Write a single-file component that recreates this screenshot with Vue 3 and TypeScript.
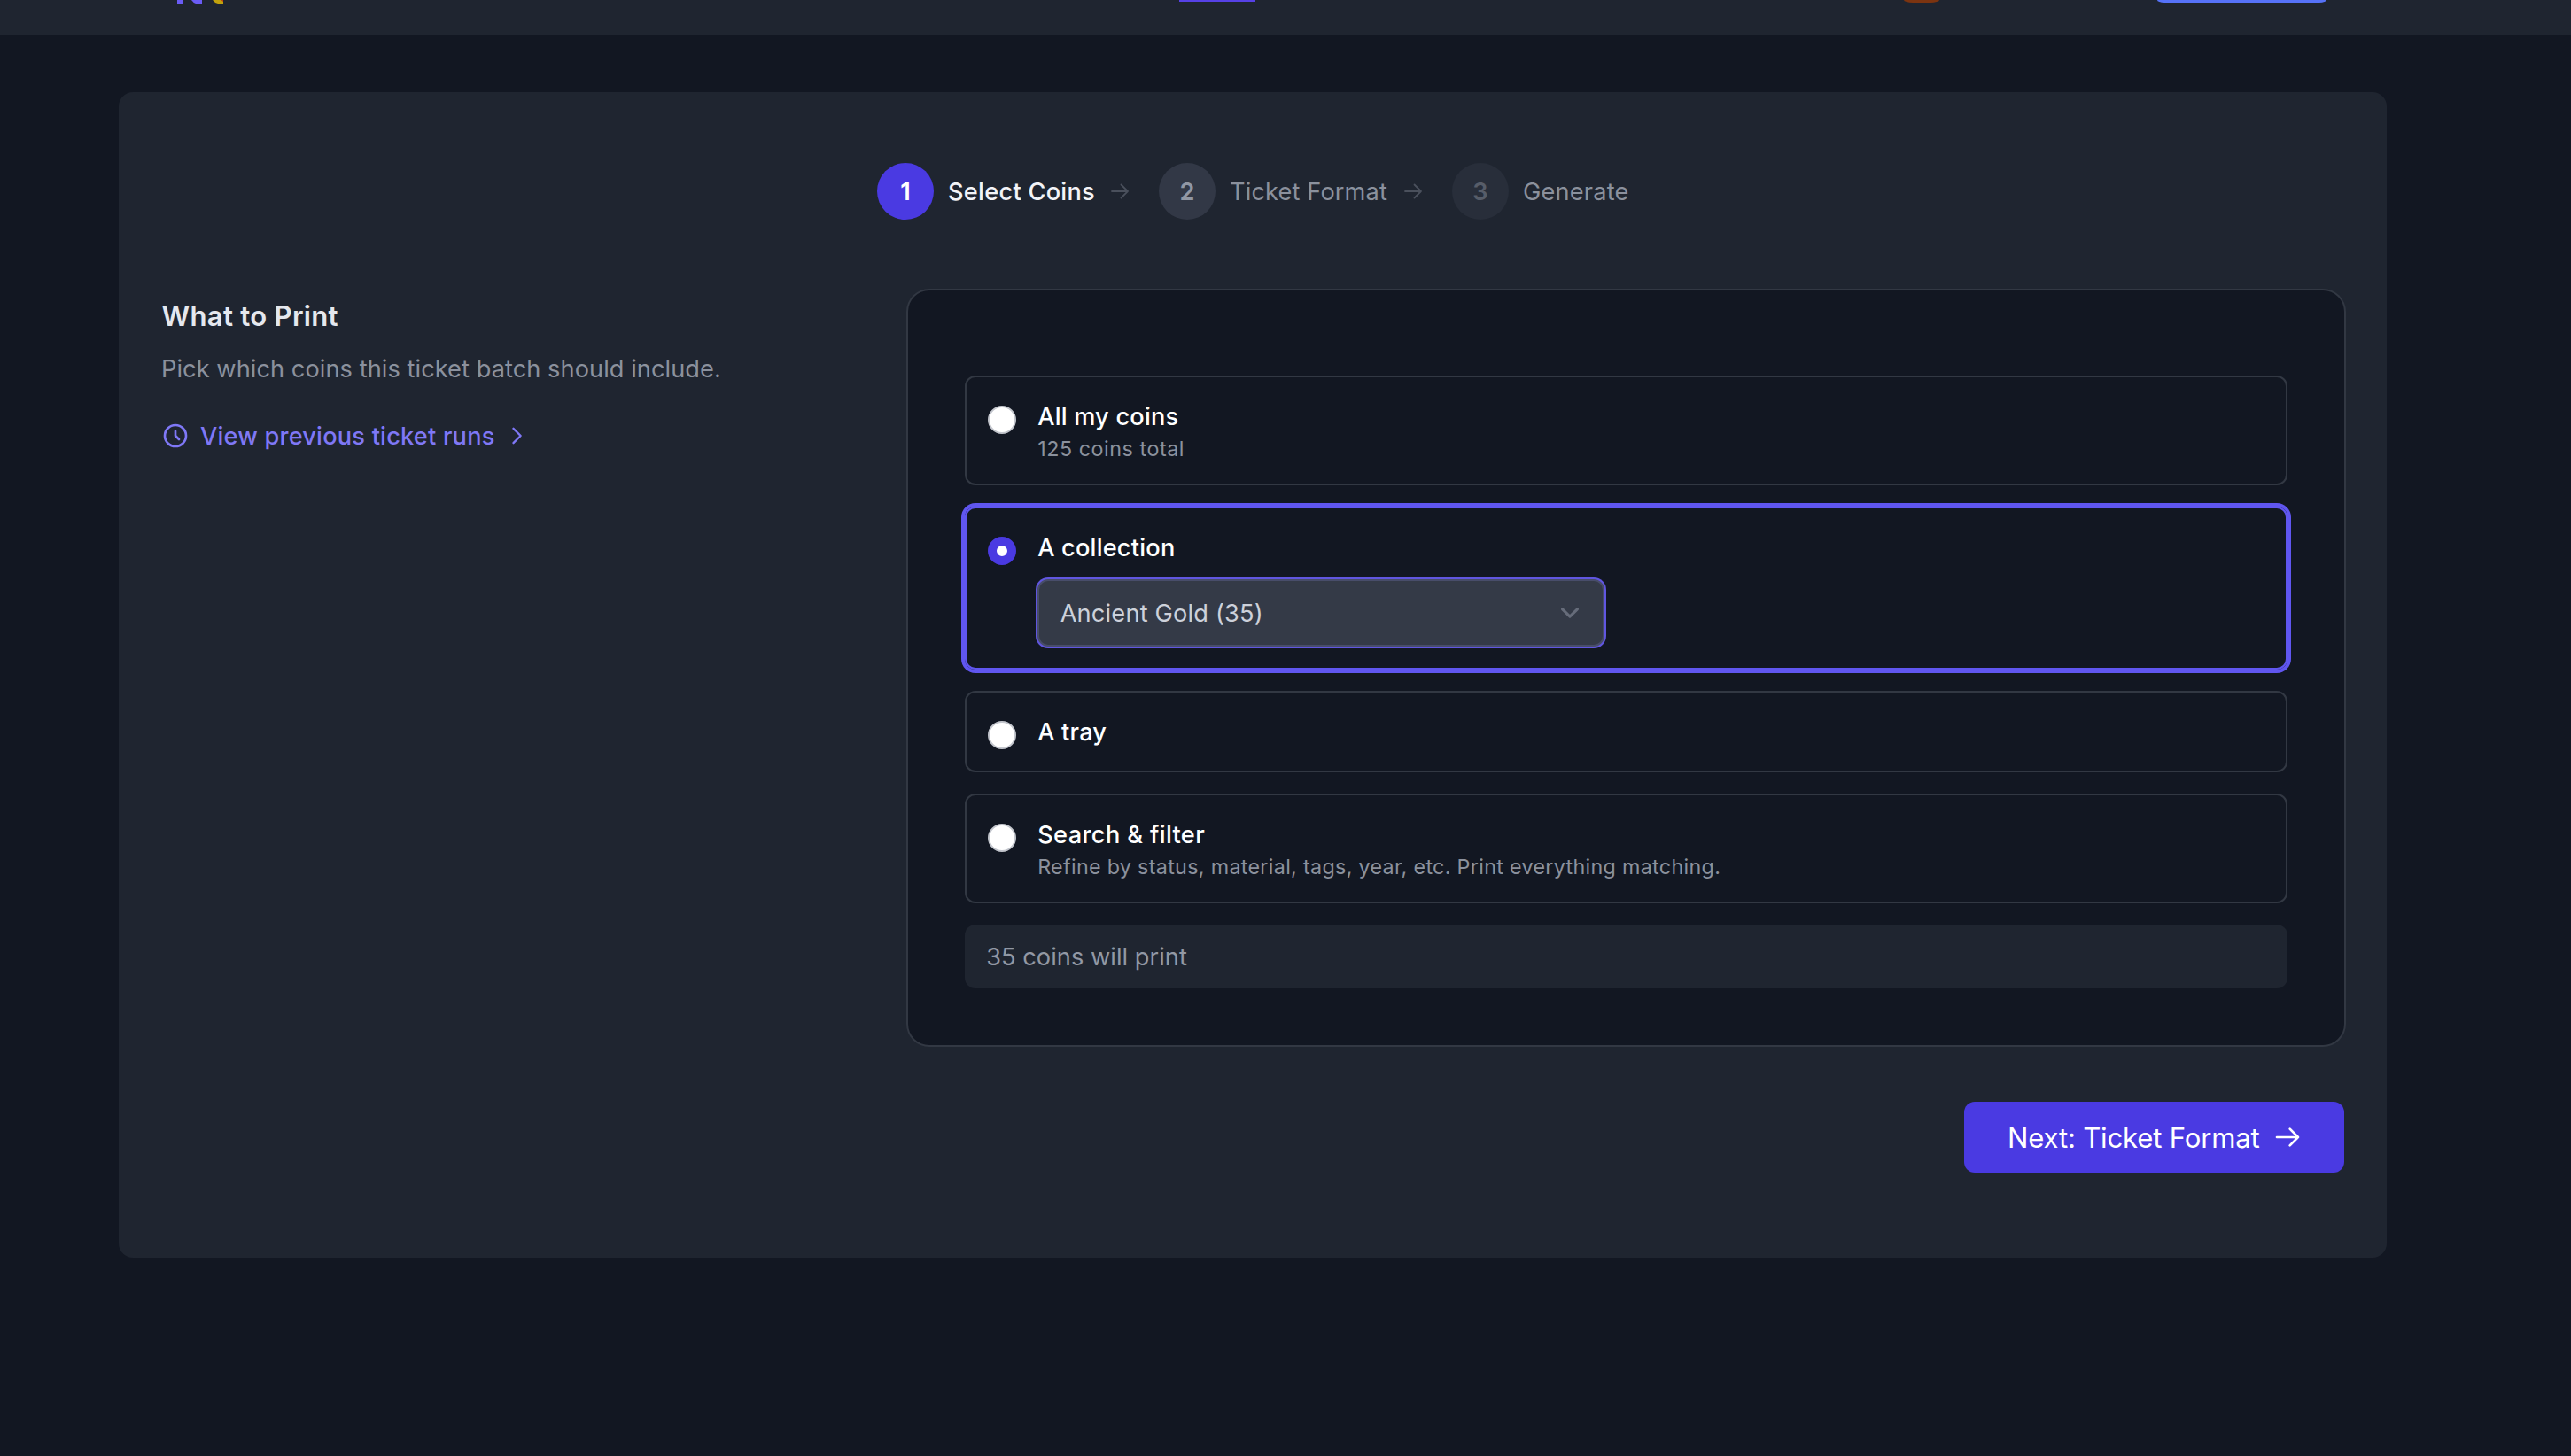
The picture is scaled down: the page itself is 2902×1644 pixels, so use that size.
<script setup lang="ts">
import { ref } from 'vue'

type Source = 'all' | 'collection' | 'tray' | 'filter'

interface Option {
  id: Source
  title: string
  hint?: string
}

const steps = ['Select Coins', 'Ticket Format', 'Generate']
const current = ref(0)

const options: Option[] = [
  { id: 'all', title: 'All my coins', hint: '125 coins total' },
  { id: 'collection', title: 'A collection' },
  { id: 'tray', title: 'A tray' },
  { id: 'filter', title: 'Search & filter', hint: 'Refine by status, material, tags, year, etc. Print everything matching.' },
]
const selected = ref<Source>('collection')
</script>

<template>
  <div class="page">
    <header class="nav">
      <svg class="logo" width="56" height="5" viewBox="0 0 56 5">
        <path d="M0 0h7l-1 4H0z" fill="#6a5cf5" />
        <path d="M16 0h12v4h-7q-3-1-5-4z" fill="#6a5cf5" />
        <path d="M40 0h12v4h-6q-4-1-6-4z" fill="#c2a20c" />
        <path d="M49 0h3v2z" fill="#c2410c" />
      </svg>
      <span class="tab-line"></span>
      <span class="avatar"></span>
      <span class="nav-button"></span>
    </header>

    <main class="panel">
      <ol class="steps">
        <li v-for="(label, i) in steps" :key="label" :class="['step', 'step-' + (i + 1), { active: i === current }]">
          <span class="num">{{ i + 1 }}</span>
          <span class="label">{{ label }}</span>
          <svg v-if="i < steps.length - 1" class="step-arrow" viewBox="0 0 24 24">
            <path d="M13.5 4.5 21 12l-7.5 7.5M21 12H3" />
          </svg>
        </li>
      </ol>

      <div class="body">
        <section class="intro">
          <h2>What to Print</h2>
          <p>Pick which coins this ticket batch should include.</p>
          <a class="history">
            <svg class="clock" viewBox="0 0 24 24"><path d="M12 8v4l3 3m6-3a9 9 0 1 1-18 0 9 9 0 0 1 18 0z" /></svg>
            <span>View previous ticket runs</span>
            <svg class="chevron" viewBox="0 0 24 24"><path d="m9 5 7 7-7 7" /></svg>
          </a>
        </section>

        <section class="card">
          <div
            v-for="o in options"
            :key="o.id"
            :class="['option', 'option-' + o.id, { selected: selected === o.id }]"
            @click="selected = o.id"
          >
            <span class="radio"></span>
            <div class="option-text">
              <div class="title">{{ o.title }}</div>
              <div v-if="o.hint" class="hint">{{ o.hint }}</div>
              <div v-if="o.id === 'collection'" class="select">
                <span>Ancient Gold (35)</span>
                <svg viewBox="0 0 20 20"><path d="m6 8 4 4 4-4" /></svg>
              </div>
            </div>
          </div>
          <div class="summary">35 coins will print</div>
        </section>
      </div>

      <div class="actions">
        <button class="next">
          <span>Next: Ticket Format</span>
          <svg viewBox="0 0 24 24"><path d="M14 5l7 7-7 7M21 12H3" /></svg>
        </button>
      </div>
    </main>
  </div>
</template>

<style>
body {
  background: #121722;
}
</style>

<style scoped>
* {
  box-sizing: border-box;
}
.page {
  min-height: 1644px;
  background: #121722;
  color: #fff;
  font-family: Inter, "Liberation Sans", sans-serif;
  font-size: 27.2px;
}
svg {
  display: block;
  flex: none;
  fill: none;
  stroke: currentColor;
  stroke-width: 2;
  stroke-linecap: round;
  stroke-linejoin: round;
}

.nav {
  display: flex;
  align-items: flex-start;
  height: 40px;
  padding-left: 200px;
  background: #1f2530;
}
.logo {
  stroke: none;
}
.tab-line {
  width: 86px;
  height: 2px;
  margin-left: 1075px;
  background: #5641e6;
}
.avatar {
  width: 40px;
  height: 3px;
  margin-left: 732px;
  border-radius: 0 0 10px 10px / 0 0 3px 3px;
  background: #7c3410;
}
.nav-button {
  width: 191px;
  height: 3px;
  margin-left: 246px;
  border-radius: 0 0 8px 8px / 0 0 3px 3px;
  background: #5672f8;
}

.panel {
  width: 2560px;
  margin: 64px 0 0 134px;
  padding: 80px 48px 96px;
  border-radius: 16px;
  background: #1f2530;
}

.steps {
  display: flex;
  justify-content: center;
  margin: 0 0 80px;
  padding: 0;
  list-style: none;
}
.step {
  display: flex;
  align-items: center;
  color: #8b919d;
}
.num {
  display: flex;
  align-items: center;
  justify-content: center;
  width: 64px;
  height: 64px;
  margin-right: 16px;
  border-radius: 50%;
  background: #323846;
  color: #9197a4;
  font-weight: 600;
}
.label {
  white-space: nowrap;
}
.step-1 .label {
  width: 166px;
  letter-spacing: 0.27px;
}
.step-2 .label {
  width: 179px;
  letter-spacing: 0.13px;
}
.step-3 .label {
  width: 119px;
  letter-spacing: 0.18px;
}
.step-3 .num {
  background: #282e3a;
  color: #575d69;
}
.step.active .num {
  background: #4a3ae2;
  color: #fff;
}
.step.active .label {
  color: #f3f4f8;
  font-weight: 470;
}
.step-arrow {
  width: 24px;
  height: 24px;
  margin: 0 32px 0 16px;
  color: #4a505c;
  stroke-width: 1.8;
}

.body {
  display: grid;
  grid-template-columns: 778.67px 1621.33px;
  column-gap: 64px;
}
h2 {
  margin: 0;
  padding-top: 1px;
  font-size: 31.1px;
  font-weight: 600;
  line-height: 57px;
  letter-spacing: 0.28px;
  text-indent: 0.5px;
  color: #e5e8ee;
}
.intro p {
  margin: 11px 0 39px;
  line-height: 40px;
  letter-spacing: 0.06px;
  color: #8b919d;
}
.history {
  display: flex;
  align-items: center;
  height: 32px;
  color: #7f78f6;
  font-weight: 470;
  letter-spacing: 0.2px;
}
.clock {
  width: 32px;
  height: 32px;
  margin-right: 12px;
}
.history span {
  width: 332px;
  white-space: nowrap;
}
.chevron {
  width: 28px;
  height: 28px;
  margin-left: 11px;
}

.card {
  display: flex;
  flex-direction: column;
  gap: 24px;
  padding: 96px 64px 64px;
  border-radius: 24px;
  background: #121722;
  box-shadow: 0 0 0 2px #323843;
}
.option {
  display: flex;
  gap: 24px;
  padding: 24px;
  border: 2px solid #323843;
  border-radius: 12px;
}
.option.selected {
  border-color: #6056f0;
  box-shadow: 0 0 0 4px #6056f0;
}
.radio {
  flex: none;
  width: 32px;
  height: 32px;
  margin-top: 8px;
  border: 2px solid #c3c6cd;
  border-radius: 50%;
  background: #fff;
}
.selected .radio {
  border: 10px solid #4a3ae2;
}
.title {
  height: 40px;
  font-weight: 470;
  line-height: 42px;
  letter-spacing: 0.2px;
  text-indent: 0.5px;
}
.option-filter .title {
  letter-spacing: 0.36px;
}
.hint {
  height: 32px;
  font-size: 23.3px;
  line-height: 34px;
  letter-spacing: 0.31px;
  text-indent: 0.5px;
  color: #8b919d;
}
.option-all .hint {
  letter-spacing: 0.54px;
}
.select {
  display: flex;
  align-items: center;
  justify-content: space-between;
  width: 640px;
  height: 76px;
  margin: 16px 0 0;
  padding: 0 16px 0 24px;
  border: 2px solid #484d6a;
  border-radius: 12px;
  background: #343a47;
  box-shadow: 0 0 0 2px #6056e0;
  color: #cdd1da;
  letter-spacing: 0.19px;
}
.select svg {
  width: 42px;
  height: 42px;
  color: #666c7a;
  stroke-width: 1.5;
}
.summary {
  height: 72px;
  padding: 0 24px;
  border-radius: 12px;
  background: #1f2530;
  color: #9298a4;
  line-height: 74px;
  letter-spacing: 0.04px;
  text-indent: 0.5px;
}

.actions {
  display: flex;
  justify-content: flex-end;
  margin-top: 64px;
}
.next {
  display: flex;
  align-items: center;
  justify-content: space-between;
  width: 429px;
  height: 80px;
  padding: 0 48px;
  border: 0;
  border-radius: 12px;
  background: #4a3ae2;
  color: #fff;
  font: 400 31.1px Inter, "Liberation Sans", sans-serif;
  letter-spacing: -0.18px;
  white-space: nowrap;
}
.next span {
  padding: 2px 0 0 1px;
}
.next svg {
  width: 32px;
  height: 32px;
}
</style>
